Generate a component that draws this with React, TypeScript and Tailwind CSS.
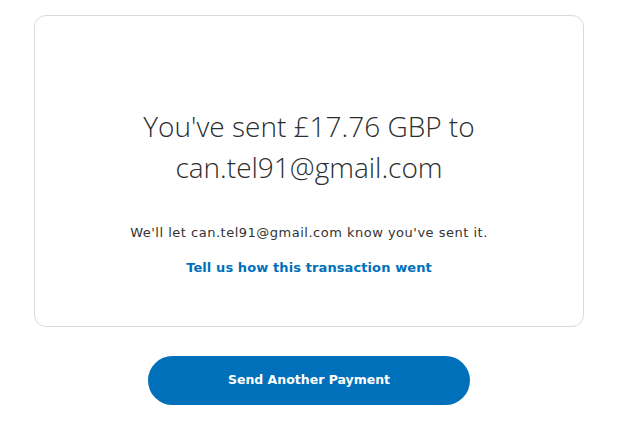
export default function App() {
  return (
    <div className="w-[630px] h-[425px] bg-white pt-[15px] pl-[34px]">
      <div className="w-[550px] flex flex-col items-center">
        <div className="w-full h-[312px] rounded-[12px] border border-[#dcdad2] flex flex-col items-center pt-[90px]">
          <h1 className="text-center text-[28px] leading-[41px] font-light text-[#2c2e2f] font-['Open_Sans',sans-serif] w-[360px]">
            You've sent £17.76 GBP to can.tel91@gmail.com
          </h1>
          <p className="mt-[36px] text-[13px] leading-[18px] tracking-[0.5px] text-[#333] font-['DejaVu_Sans',sans-serif]">
            We'll let can.tel91@gmail.com know you've sent it.
          </p>
          <a className="mt-[17px] text-[13px] leading-[18px] tracking-[0.1px] font-bold text-[#0070ba] font-['DejaVu_Sans',sans-serif]" href="#">
            Tell us how this transaction went
          </a>
        </div>
        <button className="mt-[29px] w-[322px] h-[49px] rounded-full bg-[#0070ba] text-white text-[12.5px] font-bold font-['DejaVu_Sans',sans-serif]">
          Send Another Payment
        </button>
      </div>
    </div>
  );
}
